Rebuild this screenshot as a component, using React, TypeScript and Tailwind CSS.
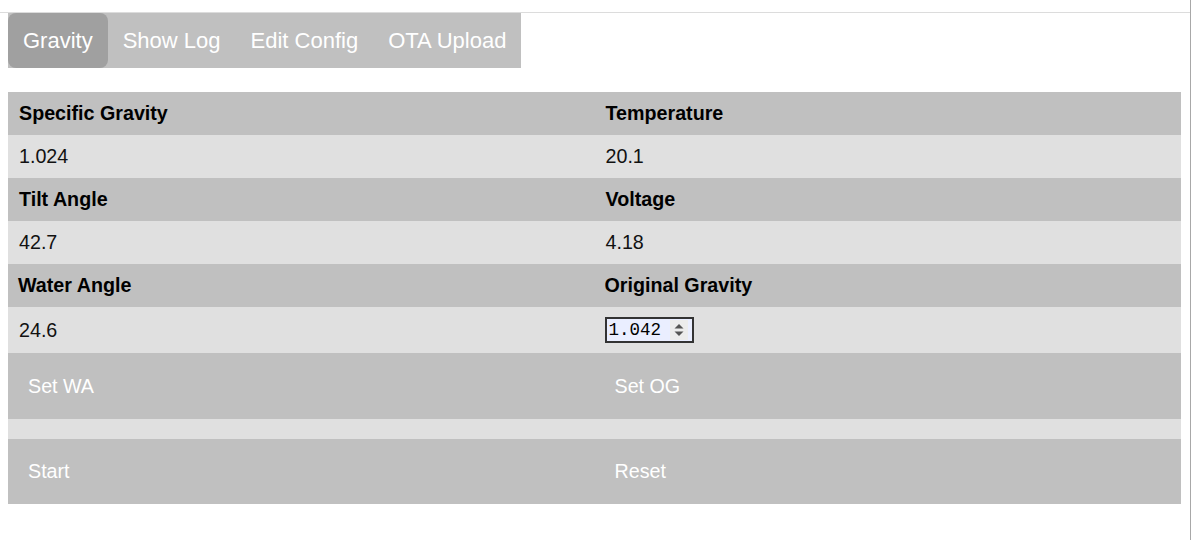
import { useState } from "react";

const TABS = ["Gravity", "Show Log", "Edit Config", "OTA Upload"];

const ROWS: { label: string; value: string }[][] = [
  [
    { label: "Specific Gravity", value: "1.024" },
    { label: "Temperature", value: "20.1" },
  ],
  [
    { label: "Tilt Angle", value: "42.7" },
    { label: "Voltage", value: "4.18" },
  ],
];

function Spinner() {
  return (
    <svg width="18" height="20" viewBox="0 0 18 20" className="shrink-0">
      <rect width="18" height="20" fill="#ececec" />
      <path d="M4.5 8.5 L9 4 L13.5 8.5 Z" fill="#555" />
      <path d="M4.5 11.5 L9 16 L13.5 11.5 Z" fill="#555" />
    </svg>
  );
}

export default function App() {
  const [tab, setTab] = useState("Gravity");
  const [og, setOg] = useState("1.042");

  return (
    <div className="flex min-h-[540px] bg-white font-['Liberation_Sans',Arial,sans-serif]">
      <div className="w-[1191px] border-r border-[#a8a8a8]">
        <div className="h-[13px] border-b border-[#dcdcdc]" />

        <div className="pl-2 pr-[9px]">
          <div className="flex w-[513px] bg-[#c0c0c0]">
            {TABS.map((t) => (
              <button
                key={t}
                onClick={() => setTab(t)}
                className={`h-[55px] px-[15px] text-[22px] leading-none whitespace-nowrap text-white ${
                  tab === t ? "rounded-lg bg-[#a0a0a0]" : ""
                }`}
              >
                {t}
              </button>
            ))}
          </div>

          <table className="mt-6 w-full table-fixed border-separate border-spacing-0 text-[19.7px] leading-[23px]">
            <tbody>
              {ROWS.map((pair, i) => (
                <>
                  <tr key={`h${i}`} className="h-[43px] bg-[#c0c0c0] text-black">
                    {pair.map((c) => (
                      <th key={c.label} className="px-[11px] text-left font-bold">
                        {c.label}
                      </th>
                    ))}
                  </tr>
                  <tr key={`v${i}`} className="h-[43px] bg-[#e0e0e0] text-[#111]">
                    {pair.map((c) => (
                      <td key={c.label} className="px-[11px]">
                        {c.value}
                      </td>
                    ))}
                  </tr>
                </>
              ))}
              <tr className="h-[43px] bg-[#c0c0c0] text-black">
                <th className="px-[10px] text-left font-bold">Water Angle</th>
                <th className="px-[10px] text-left font-bold">Original Gravity</th>
              </tr>
              <tr className="h-[46px] bg-[#e0e0e0] text-[#111]">
                <td className="px-[11px]">24.6</td>
                <td className="px-[10px]">
                  <div className="flex h-[26px] w-[89px] items-center border-2 border-[#333] bg-[#eaeeff] pr-[2px]">
                    <input
                      value={og}
                      onChange={(e) => setOg(e.target.value)}
                      className="w-[63px] bg-transparent pl-[2px] font-['Liberation_Mono',monospace] text-[17.5px] text-black outline-none"
                    />
                    <Spinner />
                  </div>
                </td>
              </tr>
              <tr className="h-[66px] bg-[#c0c0c0]">
                <td>
                  <button className="h-[66px] w-full px-5 text-left text-white">Set WA</button>
                </td>
                <td>
                  <button className="h-[66px] w-full px-5 text-left text-white">Set OG</button>
                </td>
              </tr>
              <tr className="h-5 bg-[#e0e0e0]">
                <td />
                <td />
              </tr>
              <tr className="h-[65px] bg-[#c0c0c0]">
                <td>
                  <button className="h-[65px] w-full px-5 text-left text-white">Start</button>
                </td>
                <td>
                  <button className="h-[65px] w-full px-5 text-left text-white">Reset</button>
                </td>
              </tr>
            </tbody>
          </table>
        </div>
      </div>
    </div>
  );
}
